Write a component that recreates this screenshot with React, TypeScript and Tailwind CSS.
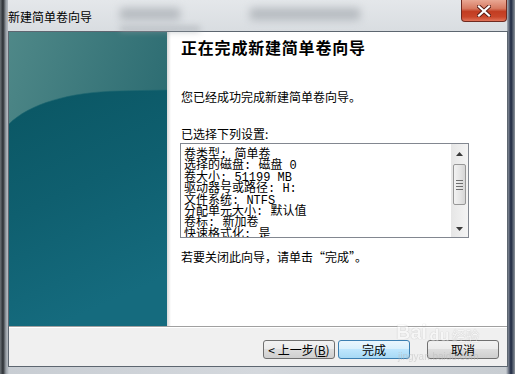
import React from "react";

const cjk = { fontFamily: '"Noto Sans CJK SC", "Noto Sans", sans-serif' };
const listFont = { fontFamily: '"Liberation Mono", "Noto Sans CJK SC", monospace' };

function TealPanel() {
  return (
    <svg width="158" height="294" viewBox="0 0 158 294" className="block">
      <defs>
        <linearGradient id="up" x1="0" y1="0" x2="1" y2="0.6">
          <stop offset="0" stopColor="#4f8888" />
          <stop offset="1" stopColor="#26676e" />
        </linearGradient>
        <linearGradient id="low" x1="0" y1="0" x2="0.3" y2="1">
          <stop offset="0" stopColor="#0a5663" />
          <stop offset="0.5" stopColor="#0f5f6f" />
          <stop offset="1" stopColor="#156b7e" />
        </linearGradient>
      </defs>
      <rect x="0" y="0" width="158" height="294" fill="url(#up)" />
      <path d="M0,92 C20,72 60,60 110,59 L158,58 L158,294 L0,294 Z" fill="url(#low)" />
      <path d="M0,92 C20,72 60,60 110,59 L158,58" fill="none" stroke="#1d6670" strokeWidth="1" opacity="0.6" />
    </svg>
  );
}

function Btn({ children, primary }: { children: React.ReactNode; primary?: boolean }) {
  return (
    <div
      className={
        "h-[19px] w-[72px] rounded-[3px] border flex items-center justify-center text-[12px] leading-none text-black " +
        (primary
          ? "border-[#3c7fb1] bg-[linear-gradient(#eaf6fd_0%,#d9f0fc_45%,#bee6fd_50%,#a7d9f5_100%)]"
          : "border-[#707070] bg-[linear-gradient(#f2f2f2_0%,#ebebeb_45%,#dddddd_50%,#cfcfcf_100%)]")
      }
      style={cjk}
    >
      {children}
    </div>
  );
}

export default function App() {
  const lines = [
    "卷类型: 简单卷",
    "选择的磁盘: 磁盘 0",
    "卷大小: 51199 MB",
    "驱动器号或路径: H:",
    "文件系统: NTFS",
    "分配单元大小: 默认值",
    "卷标: 新加卷",
    "快速格式化: 是",
  ];
  return (
    <div
      className="relative w-[515px] h-[374px] overflow-hidden bg-[linear-gradient(90deg,#6d7378_0px,#2a2e33_3px,#9aa1a8_6px,#c8cdd3_9px,#d4d8dd_50%,#c8cdd2_calc(100%-9px),#1c2740_calc(100%-4px),#8d949b_100%)]"
      style={cjk}
    >
      {/* title bar glass */}
      <div className="absolute left-[8px] right-[8px] top-0 h-[31px] rounded-tr-[6px] bg-[linear-gradient(180deg,#e4e7ea,#d9dde1)]" />
      <div className="absolute left-[120px] top-[8px] w-[60px] h-[12px] bg-[#9aa0a6] blur-[4px] opacity-60" />
      <div className="absolute left-[250px] top-[8px] w-[110px] h-[12px] bg-[#9aa0a6] blur-[4px] opacity-60" />
      <div className="absolute left-[120px] top-[26px] w-[80px] h-[6px] bg-[#9aa0a6] blur-[3px] opacity-50" />

      <div className="relative h-[31px] flex items-center pl-[8px] pt-[2px] text-[12px] text-black">
        新建简单卷向导
      </div>

      {/* close button */}
      <div className="absolute top-0 left-[461px] w-[46px] h-[22px] rounded-b-[4px] border border-t-0 border-[#6f2a20] bg-[linear-gradient(180deg,#e9a793_0%,#d77a62_40%,#c23d22_55%,#c9462a_80%,#e1745a_100%)] flex items-center justify-center">
        <svg width="14" height="12" viewBox="0 0 14 12">
          <path d="M2,1.5 L12,10.5 M12,1.5 L2,10.5" stroke="#5a1c14" strokeWidth="4" strokeLinecap="square" />
          <path d="M2,1.5 L12,10.5 M12,1.5 L2,10.5" stroke="#ffffff" strokeWidth="2.2" strokeLinecap="square" />
        </svg>
      </div>

      {/* client area */}
      <div className="ml-[8px] w-[500px] h-[336px] border border-[#5d6670] flex flex-col bg-[#f0f0f0]">
        <div className="flex h-[294px] bg-white">
          <div className="w-[158px] shrink-0">
            <TealPanel />
          </div>
          <div className="w-[4px] bg-[linear-gradient(90deg,#d8d8d8,#ffffff)]" />
          <div className="flex-1 flex flex-col pl-[10px] text-black">
            <div className="mt-[5px] h-[20px] leading-[20px] text-[16px] font-bold tracking-[0.8px]">
              正在完成新建简单卷向导
            </div>
            <div className="mt-[32px] h-[16px] leading-[16px] text-[12px]">您已经成功完成新建简单卷向导。</div>
            <div className="mt-[21px] h-[16px] leading-[16px] text-[12px]">已选择下列设置:</div>
            <div className="mt-[1px] -ml-[1px] w-[289px] h-[95px] border border-[#828790] bg-white flex overflow-hidden">
              <div className="flex-1 pl-[3px] pt-[6px] text-[12px] leading-[11px] overflow-hidden" style={listFont}>
                {lines.map((l) => (
                  <div key={l} className="h-[11.4px] whitespace-pre">
                    {l}
                  </div>
                ))}
              </div>
              <div className="w-[17px] h-full bg-[linear-gradient(90deg,#e6e6e6,#f4f4f4)] flex flex-col items-center">
                <div className="h-[20px] flex items-center justify-center">
                  <svg width="7" height="4" viewBox="0 0 7 4">
                    <path d="M0,4 L3.5,0 L7,4 Z" fill="#3a3a3a" />
                  </svg>
                </div>
                <div className="w-[13px] h-[41px] rounded-[2px] border border-[#979797] bg-[linear-gradient(90deg,#f2f2f2,#e6e6e6_50%,#d6d6d6)] flex flex-col items-center justify-center gap-[2px]">
                  <div className="w-[7px] h-[1px] bg-[#6f6f6f]" />
                  <div className="w-[7px] h-[1px] bg-[#6f6f6f]" />
                  <div className="w-[7px] h-[1px] bg-[#6f6f6f]" />
                  <div className="w-[7px] h-[1px] bg-[#6f6f6f]" />
                </div>
                <div className="flex-1" />
                <div className="h-[16px] flex items-center justify-center">
                  <svg width="7" height="4" viewBox="0 0 7 4">
                    <path d="M0,0 L7,0 L3.5,4 Z" fill="#3a3a3a" />
                  </svg>
                </div>
              </div>
            </div>
            <div className="mt-[11px] h-[16px] leading-[16px] text-[12px]">若要关闭此向导，请单击“完成”。</div>
          </div>
        </div>
        <div className="h-[1px] bg-[#a0a0a0]" />
        <div className="h-[1px] bg-white" />
        <div className="flex-1 flex items-start pt-[12px] pl-[254px] gap-[3px]">
          <Btn>
            &lt; 上一步(<span className="underline">B</span>)
          </Btn>
          <Btn primary>完成</Btn>
          <div className="w-[11px]" />
          <Btn>取消</Btn>
        </div>
      </div>

      {/* watermark */}
      <div className="absolute left-[396px] top-[322px] flex items-end gap-[2px] opacity-40 text-white [text-shadow:0_0_1px_#555]">
        <span className="text-[20px] font-bold leading-none" style={{ fontFamily: '"Liberation Sans", sans-serif' }}>Bai</span>
        <span className="text-[16px] font-bold leading-none">du</span>
        <span className="text-[14px] leading-none">经验</span>
      </div>
      <div className="absolute left-[398px] top-[352px] text-[10px] leading-none text-[#bbbbbb] opacity-50" style={{ fontFamily: '"Liberation Sans", sans-serif' }}>
        jingyan.baidu.com
      </div>
    </div>
  );
}
